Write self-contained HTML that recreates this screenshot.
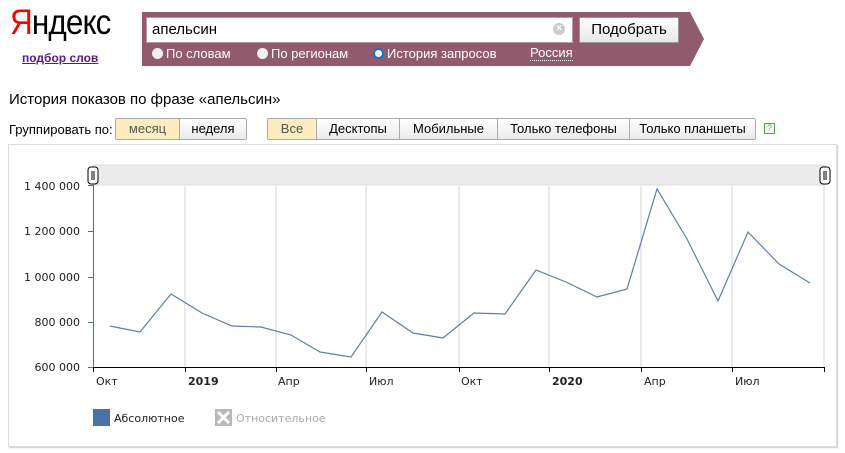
<!DOCTYPE html>
<html><head><meta charset="utf-8"><style>
*{margin:0;padding:0;box-sizing:border-box}
body{width:845px;height:453px;background:#fff;font-family:"Liberation Sans","Noto Sans CJK SC",sans-serif;font-size:13px;color:#000;position:relative;overflow:hidden}
.abs{position:absolute}
.logo{left:10px;top:3px;font-size:35px;letter-spacing:-1px;font-family:"Liberation Sans",sans-serif;line-height:40px;transform:scaleX(0.9);transform-origin:left}
.sub{left:22px;top:51px;font-size:12px;font-weight:bold;color:#551a8b;text-decoration:underline}
.bar{left:142px;top:12px;width:548px;height:54px;background:#915a6d}
.arrow{left:690px;top:12px;width:0;height:0;border-top:27px solid transparent;border-bottom:27px solid transparent;border-left:14px solid #915a6d}
.inp{left:146px;top:17px;width:427px;height:26px;background:#fff;border:1px solid #b89aa4;font-size:15px;padding:3px 5px}
.clr{left:553px;top:23px;width:12px;height:12px;border-radius:50%;background:#ccc;color:#fff;font-size:10px;line-height:12px;text-align:center;font-weight:bold}
.btn{left:579px;top:17px;width:100px;height:26px;background:linear-gradient(#fff,#e8e8e8);border:1px solid #999;border-radius:2px;font-size:15px;text-align:center;line-height:24px}
.rad{top:46px;color:#fff;font-size:13px}
.rad i{display:inline-block;width:11px;height:11px;border-radius:50%;background:#f0f0f0;vertical-align:-1px;margin-right:3px}
.title{left:9px;top:91px;font-size:15px}
.grp{left:9px;top:122px;font-size:13px}
.tabs{top:118px;height:22px;display:flex;border:1px solid #aaa;border-radius:2px}
.tabs span{text-align:center;line-height:20px;font-size:13px;background:linear-gradient(#fff,#eaeaea);border-left:1px solid #aaa}
.tabs span:first-child{border-left:0}
.tabs span.on{background:#fbedbf;color:#555}
.help{left:764px;top:123px;width:11px;height:11px;border:1px solid #4a4;font-size:9px;line-height:9px;text-align:center;color:#4a4}
.box{left:8px;top:144px;width:829px;height:303px;border:1px solid #ddd;box-shadow:1px 1px 1px #ccc}
svg text{font-family:"DejaVu Sans",sans-serif;font-size:11px}
</style></head><body>
<div class="abs logo"><span style="color:#f00">Я</span>ндекс</div>
<div class="abs sub">подбор слов</div>
<div class="abs bar"></div><div class="abs arrow"></div>
<div class="abs inp">апельсин</div>
<div class="abs clr">×</div>
<div class="abs btn">Подобрать</div>
<div class="abs rad" style="left:152px"><i></i>По словам</div>
<div class="abs rad" style="left:257px"><i></i>По регионам</div>
<div class="abs rad" style="left:373px"><i style="background:#fff;border:2px solid #1a6fd6"></i>История запросов</div>
<div class="abs rad" style="left:530px;border-bottom:1px dotted #fff;line-height:14px">Россия</div>
<div class="abs title">История показов по фразе «апельсин»</div>
<div class="abs grp">Группировать по:</div>
<div class="abs tabs" style="left:115px"><span class="on" style="width:63px">месяц</span><span style="width:67px">неделя</span></div>
<div class="abs tabs" style="left:267px"><span class="on" style="width:48px">Все</span><span style="width:83px">Десктопы</span><span style="width:98px">Мобильные</span><span style="width:132px">Только телефоны</span><span style="width:126px">Только планшеты</span></div>
<div class="abs help">?</div>
<div class="abs box"></div>
<svg class="abs" style="left:0;top:0" width="845" height="453">
<rect x="93" y="165" width="732" height="20" fill="#ebebeb" stroke="#ddd"/>
<g stroke="#d6d6d6"><line x1="185" y1="186" x2="185" y2="367"/><line x1="276" y1="186" x2="276" y2="367"/><line x1="366" y1="186" x2="366" y2="367"/><line x1="459" y1="186" x2="459" y2="367"/><line x1="549" y1="186" x2="549" y2="367"/><line x1="641" y1="186" x2="641" y2="367"/><line x1="732" y1="186" x2="732" y2="367"/><line x1="824" y1="186" x2="824" y2="367"/></g>
<line x1="93.5" y1="185" x2="93.5" y2="367" stroke="#4a6fa5"/>
<g stroke="#4a6fa5"><line x1="88" y1="185.5" x2="93" y2="185.5"/><line x1="88" y1="231.5" x2="93" y2="231.5"/><line x1="88" y1="277.5" x2="93" y2="277.5"/><line x1="88" y1="322.5" x2="93" y2="322.5"/><line x1="88" y1="367.5" x2="93" y2="367.5"/></g>
<line x1="93" y1="367.5" x2="825" y2="367.5" stroke="#000"/>
<g stroke="#000"><line x1="93.5" y1="367" x2="93.5" y2="372"/><line x1="185.5" y1="367" x2="185.5" y2="372"/><line x1="276.5" y1="367" x2="276.5" y2="372"/><line x1="366.5" y1="367" x2="366.5" y2="372"/><line x1="459.5" y1="367" x2="459.5" y2="372"/><line x1="549.5" y1="367" x2="549.5" y2="372"/><line x1="641.5" y1="367" x2="641.5" y2="372"/><line x1="732.5" y1="367" x2="732.5" y2="372"/><line x1="824.5" y1="367" x2="824.5" y2="372"/></g>
<g text-anchor="end" fill="#222"><text x="80" y="190">1 400 000</text><text x="80" y="235">1 200 000</text><text x="80" y="281">1 000 000</text><text x="80" y="326">800 000</text><text x="80" y="371">600 000</text></g>
<g fill="#222"><text x="96" y="385">Окт</text><text x="188" y="385" font-weight="bold">2019</text><text x="278" y="385">Апр</text><text x="369" y="385">Июл</text><text x="461" y="385">Окт</text><text x="552" y="385" font-weight="bold">2020</text><text x="644" y="385">Апр</text><text x="735" y="385">Июл</text></g>
<polyline fill="none" stroke="#5b7db1" stroke-width="1.2" points="110,326 140,332 171,294 202,313 232,326 261,327 291,335 320,352 351,357 382,312 413,333 443,338 474,313 505,314 536,270 566,282 597,297 627,289 657,189 687,239 718,301 748,232 779,264 810,283"/>
<rect x="88" y="167" width="10" height="17" rx="3" fill="#fff" stroke="#000"/><line x1="92" y1="171" x2="92" y2="180" stroke="#000"/><line x1="94" y1="171" x2="94" y2="180" stroke="#000"/>
<rect x="820" y="167" width="10" height="17" rx="3" fill="#fff" stroke="#000"/><line x1="824" y1="171" x2="824" y2="180" stroke="#000"/><line x1="826" y1="171" x2="826" y2="180" stroke="#000"/>
<rect x="93" y="409" width="17" height="17" fill="#4a72a8"/>
<text x="114" y="422" fill="#222">Абсолютное</text>
<rect x="215" y="409" width="17" height="17" fill="#b8b8b8"/>
<path d="M218 412 L229 423 M229 412 L218 423" stroke="#fff" stroke-width="3"/>
<text x="236" y="422" fill="#aaa">Относительное</text>
</svg>
</body></html>
